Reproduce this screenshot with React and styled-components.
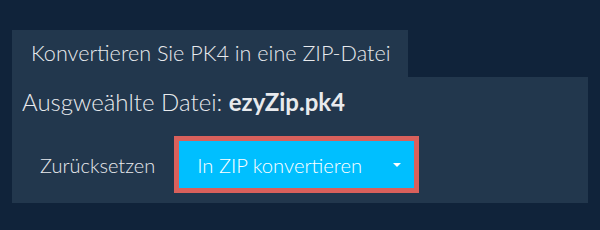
import React from "react";
import styled, { createGlobalStyle } from "styled-components";

const Global = createGlobalStyle`
  html, body { margin: 0; padding: 0; background: #10233a; }
  body { font-family: Lato, "Noto Sans", sans-serif; color: #e6e9ec; }
`;

const Page = styled.div`
  padding: 30px 12px 0 12px;
`;

const Tabs = styled.div`
  display: flex;
`;

const Tab = styled.div`
  background: #22374d;
  height: 47px;
  line-height: 46px;
  padding: 0 18px 0 19px;
  font-size: 21.6px;
  font-weight: 300;
  color: #e8eaed;
  white-space: nowrap;
`;

const Panel = styled.div`
  background: #22374d;
  padding: 10px 10px 10px 10px;
  display: flex;
  flex-direction: column;
  gap: 19px;
`;

const FileLabel = styled.div`
  font-size: 24px;
  font-weight: 300;
  line-height: 30px;
  color: #e8eaed;
  b { font-weight: 700; }
`;

const Actions = styled.div`
  display: flex;
  align-items: center;
`;

const ResetButton = styled.button`
  background: transparent;
  border: none;
  color: #e8eaed;
  font-family: inherit;
  font-size: 20px;
  font-weight: 300;
  padding: 0 18px;
  margin-right: 1px;
  height: 48px;
  cursor: pointer;
`;

const SplitGroup = styled.div`
  display: flex;
  border: 5px solid #d9605b;
`;

const PrimaryButton = styled.button`
  background: #00bfff;
  border: none;
  color: #ffffff;
  font-family: inherit;
  font-size: 20.2px;
  font-weight: 300;
  height: 47px;
  padding: ${(p) => (p.$caret ? "0 13px" : "0 18px")};
  display: flex;
  align-items: center;
  cursor: pointer;
`;

const Caret = styled.span`
  width: 0;
  height: 0;
  border-left: 4px solid transparent;
  border-right: 4px solid transparent;
  border-top: 4px solid #ffffff;
  margin-top: 1px;
`;

export default function App() {
  return (
    <>
      <Global />
      <Page>
        <Tabs>
          <Tab>Konvertieren Sie PK4 in eine ZIP-Datei</Tab>
        </Tabs>
        <Panel>
          <FileLabel>
            Ausgweählte Datei: <b>ezyZip.pk4</b>
          </FileLabel>
          <Actions>
            <ResetButton>Zurücksetzen</ResetButton>
            <SplitGroup>
              <PrimaryButton>In ZIP konvertieren</PrimaryButton>
              <PrimaryButton $caret aria-label="Mehr Optionen">
                <Caret />
              </PrimaryButton>
            </SplitGroup>
          </Actions>
        </Panel>
      </Page>
    </>
  );
}
